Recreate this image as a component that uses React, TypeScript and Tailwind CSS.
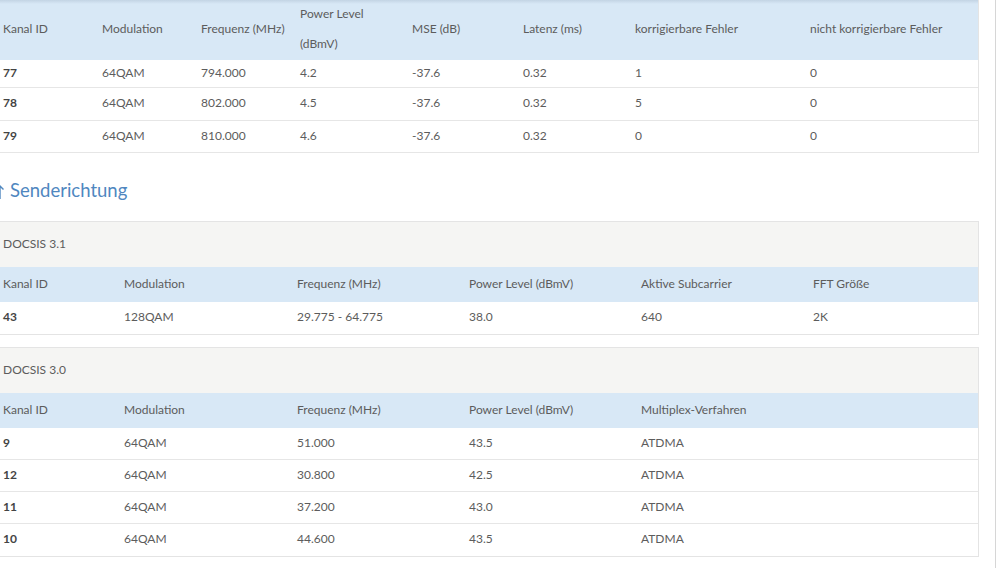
import React from 'react';

const downCols = [99, 99, 99, 112, 111, 112, 175, 168];
const upCols = [121, 173, 172, 172, 172, 168];

const Row = ({ cells, cols, bold = true, h = 'h-[33px]' }: { cells: string[]; cols: number[]; bold?: boolean; h?: string }) => (
  <div className={`flex items-center border-b border-[#e6e6e6] bg-white pb-[2px] ${h}`}>
    {cells.map((c, i) => (
      <div
        key={i}
        style={{ width: cols[i] }}
        className={`shrink-0 pl-[3px] ${i === 0 && bold ? 'font-bold text-[#444]' : ''}`}
      >
        {c}
      </div>
    ))}
  </div>
);

const HeadRow = ({ cells, cols, h }: { cells: React.ReactNode[]; cols: number[]; h: string }) => (
  <div className={`flex items-center bg-[#d8e8f6] pb-[2px] ${h}`}>
    {cells.map((c, i) => (
      <div key={i} style={{ width: cols[i] }} className="shrink-0 pl-[3px]">
        {c}
      </div>
    ))}
  </div>
);

const Panel = ({ title, head, rows }: { title: string; head: string[]; rows: string[][] }) => (
  <div className="border border-[#e4e4e4] border-l-0">
    <div className="flex h-[45px] items-center bg-[#f5f5f3] pb-[2px] pl-[3px]">{title}</div>
    <HeadRow cells={head} cols={upCols} h="h-[35px]" />
    {rows.map((r, i) => (
      <Row key={i} cells={r} cols={upCols} h={i === rows.length - 1 ? 'h-[32px] border-b-0' : 'h-[32px]'} />
    ))}
  </div>
);

export default function App() {
  const down = [
    ['77', '64QAM', '794.000', '4.2', '-37.6', '0.32', '1', '0'],
    ['78', '64QAM', '802.000', '4.5', '-37.6', '0.32', '5', '0'],
    ['79', '64QAM', '810.000', '4.6', '-37.6', '0.32', '0', '0'],
  ];
  const up30 = [
    ['9', '64QAM', '51.000', '43.5', 'ATDMA', ''],
    ['12', '64QAM', '30.800', '42.5', 'ATDMA', ''],
    ['11', '64QAM', '37.200', '43.0', 'ATDMA', ''],
    ['10', '64QAM', '44.600', '43.5', 'ATDMA', ''],
  ];

  return (
    <div className="flex h-[568px] w-[999px] overflow-hidden bg-white font-['Lato',sans-serif] text-[12px] text-[#5c5c5c]">
      <div className="w-[996px] shrink-0 border-r border-[#d6d6d6]">
        <div className="w-[979px]">
          {/* Empfangsrichtung table (scrolled) */}
          <div className="border-r border-[#e4e4e4]">
            <div className="relative">
              <HeadRow
                cols={downCols}
                h="h-[60px]"
                cells={[
                  'Kanal ID',
                  'Modulation',
                  'Frequenz (MHz)',
                  <span className="block leading-[30px]">Power Level<br />(dBmV)</span>,
                  'MSE (dB)',
                  'Latenz (ms)',
                  'korrigierbare Fehler',
                  'nicht korrigierbare Fehler',
                ]}
              />
              <div className="absolute left-0 right-0 top-0 h-[4px] bg-gradient-to-b from-[#c3d4e4] to-transparent" />
            </div>
            <Row cells={down[0]} cols={downCols} h="h-[28px]" />
            <Row cells={down[1]} cols={downCols} h="h-[33px]" />
            <Row cells={down[2]} cols={downCols} h="h-[32px]" />
          </div>

          {/* Senderichtung */}
          <h2 className="flex h-[68px] items-center pt-[8px] text-[18.5px] text-[#4f87bf]">
            <svg width="10" height="16" viewBox="0 0 10 16" className="-ml-[5px] mr-[5px] mt-[2px]" fill="none" stroke="#4f87bf" strokeWidth="1.4">
              <path d="M5 15V2M1.5 5.5 5 2l3.5 3.5" />
            </svg>
            Senderichtung
          </h2>

          <Panel
            title="DOCSIS 3.1"
            head={['Kanal ID', 'Modulation', 'Frequenz (MHz)', 'Power Level (dBmV)', 'Aktive Subcarrier', 'FFT Größe']}
            rows={[['43', '128QAM', '29.775 - 64.775', '38.0', '640', '2K']]}
          />
          <div className="h-[12px]" />
          <Panel
            title="DOCSIS 3.0"
            head={['Kanal ID', 'Modulation', 'Frequenz (MHz)', 'Power Level (dBmV)', 'Multiplex-Verfahren', '']}
            rows={up30}
          />
        </div>
      </div>
    </div>
  );
}
